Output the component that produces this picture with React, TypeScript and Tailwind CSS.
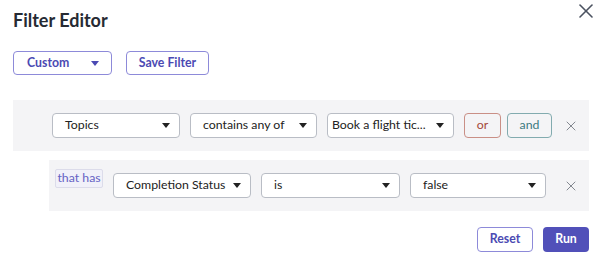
import { X } from "lucide-react";

function Caret({ className = "" }: { className?: string }) {
    return (
        <svg width="8" height="5" viewBox="0 0 10 6" className={className}>
            <path d="M0 0 L10 0 L5 6 Z" fill="currentColor" />
        </svg>
    );
}

function Select({ label, width, pad = "pl-[12px]" }: { label: string; width: string; pad?: string }) {
    return (
        <div
            className={`${width} ${pad} h-[25px] flex items-center justify-between pr-[9px] bg-white border border-[#b9bdc5] rounded-[4px] text-[12.3px] text-[#222]`}
        >
            <span className="whitespace-nowrap">{label}</span>
            <Caret className="text-[#222] shrink-0" />
        </div>
    );
}

export default function App() {
    return (
        <div
            className="relative w-[600px] h-[262px] bg-white overflow-hidden"
            style={{ fontFamily: "Lato, 'Noto Sans', sans-serif" }}
        >
            <button className="absolute right-[2px] top-[-1px] text-[#4b5260]">
                <X size={24} strokeWidth={1.6} />
            </button>

            <div className="pt-[8px] pl-[13px] pr-[11px]">
                <h1 className="text-[18px] leading-[24px] font-bold text-[#262a33]">
                    Filter Editor
                </h1>

                <div className="flex gap-[14px] mt-[19px]">
                    <div className="w-[99px] h-[24px] flex items-center justify-between pl-[13px] pr-[12px] border border-[#8d8ad9] rounded-[4px] text-[12.3px] font-bold text-[#4b4ab3]">
                        <span>Custom</span>
                        <Caret className="text-[#4b4ab3]" />
                    </div>
                    <div className="w-[83px] h-[24px] flex items-center justify-center border border-[#8d8ad9] rounded-[4px] text-[12.3px] font-bold text-[#4b4ab3]">
                        Save Filter
                    </div>
                </div>

                <div className="mt-[25px] h-[51px] bg-[#f4f4f6] flex items-center pl-[39px] gap-[10px]">
                    <Select label="Topics" width="w-[128px]" />
                    <Select label="contains any of" width="w-[127px]" />
                    <Select label="Book a flight tic..." width="w-[127px]" pad="pl-[4px]" />
                    <div className="w-[37px] h-[25px] flex items-center justify-center border border-[#c98f86] rounded-[4px] text-[12.3px] text-[#a4483b]">
                        or
                    </div>
                    <div className="w-[45px] h-[25px] -ml-[4px] flex items-center justify-center border border-[#82abaf] rounded-[4px] text-[12.3px] text-[#3c7a80]">
                        and
                    </div>
                    <X size={16} strokeWidth={1.4} className="ml-[1px] text-[#7b7f88]" />
                </div>

                <div className="mt-[9px] ml-[36px] h-[51px] bg-[#f4f4f6] flex items-start pt-[9px] pl-[6px] gap-[10px]">
                    <div className="h-[19px] w-[48px] flex items-center justify-center bg-[#f1f1f9] border border-[#dcdcea] rounded-[2px] text-[12.3px] text-[#6562c4]">
                        that has
                    </div>
                    <div className="mt-[4px] flex items-center gap-[10px]">
                        <Select label="Completion Status" width="w-[138px]" />
                        <Select label="is" width="w-[139px]" />
                        <Select label="false" width="w-[136px]" />
                        <X size={16} strokeWidth={1.4} className="ml-[7px] text-[#7b7f88]" />
                    </div>
                </div>

                <div className="mt-[16px] flex justify-end gap-[10px]">
                    <div className="w-[56px] h-[25px] flex items-center justify-center border border-[#8d8ad9] rounded-[4px] text-[12.3px] font-bold text-[#4b4ab3]">
                        Reset
                    </div>
                    <div className="w-[46px] h-[25px] flex items-center justify-center bg-[#5150b9] rounded-[4px] text-[12.3px] font-bold text-white">
                        Run
                    </div>
                </div>
            </div>
        </div>
    );
}
